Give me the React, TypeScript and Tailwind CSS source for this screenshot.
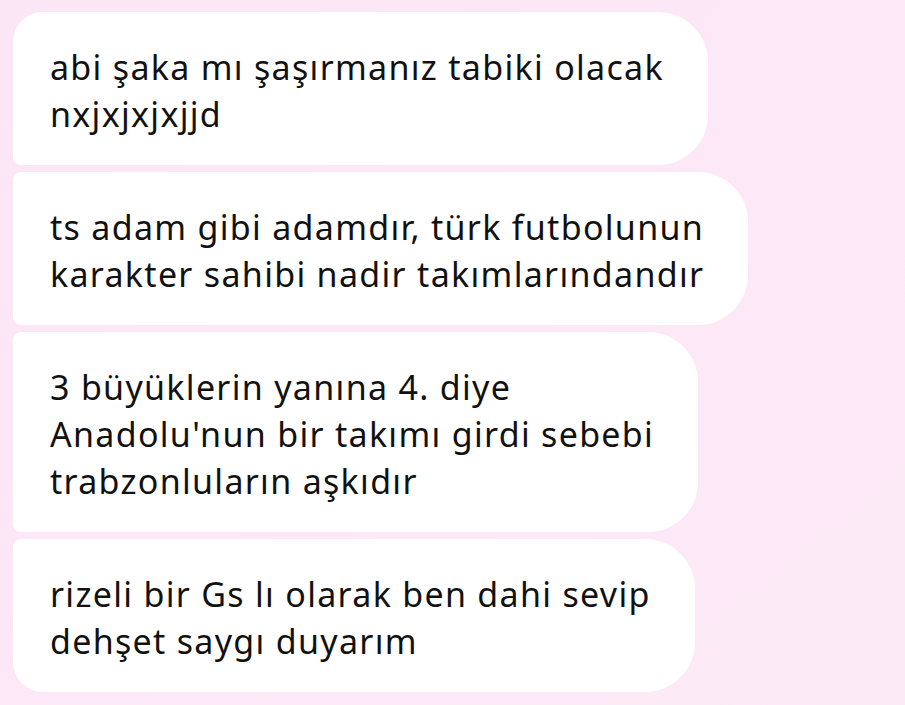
const messages = [
  {
    lines: ["abi şaka mı şaşırmanız tabiki olacak", "nxjxjxjxjjd"],
    corners: "rounded-tl-[30px] rounded-bl-[8px]",
  },
  {
    lines: ["ts adam gibi adamdır, türk futbolunun", "karakter sahibi nadir takımlarındandır"],
    corners: "rounded-tl-[8px] rounded-bl-[8px]",
  },
  {
    lines: ["3 büyüklerin yanına 4. diye", "Anadolu'nun bir takımı girdi sebebi", "trabzonluların aşkıdır"],
    corners: "rounded-tl-[8px] rounded-bl-[8px]",
  },
  {
    lines: ["rizeli bir Gs lı olarak ben dahi sevip", "dehşet saygı duyarım"],
    corners: "rounded-tl-[8px] rounded-bl-[30px]",
  },
];

export default function App() {
  return (
    <div className="w-[905px] h-[705px] overflow-hidden bg-gradient-to-br from-[#fbe6f5] via-[#fce8f6] to-[#fdeaf7] pt-[12px] pl-[13px]">
      <div className="flex flex-col items-start gap-[7px]">
        {messages.map((m, i) => (
          <div
            key={i}
            className={`bg-white rounded-r-[50px] ${m.corners} pl-[37px] pr-[44px] pt-[32px] pb-[27px] text-[34px] leading-[47px] tracking-[1.3px] text-[#111111] whitespace-nowrap`}
            style={{ fontFamily: "'Noto Sans', Roboto, sans-serif" }}
          >
            {m.lines.map((l) => (
              <div key={l}>{l}</div>
            ))}
          </div>
        ))}
      </div>
    </div>
  );
}
